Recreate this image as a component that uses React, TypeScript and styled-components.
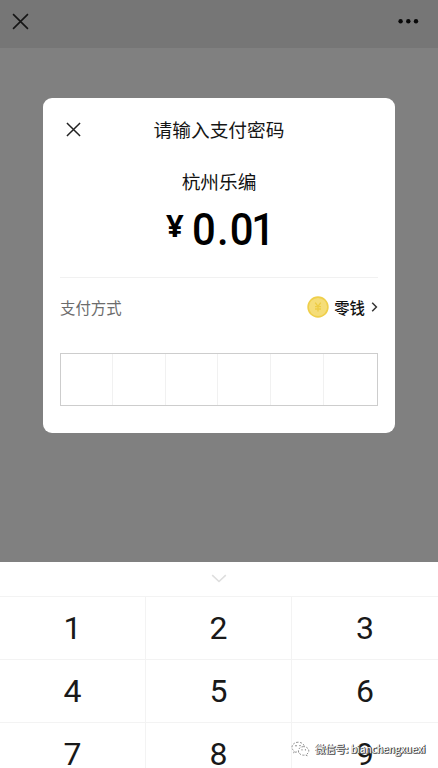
import React from "react";
import styled, { createGlobalStyle } from "styled-components";

const GlobalStyle = createGlobalStyle`
  * { box-sizing: border-box; }
  html, body { margin: 0; padding: 0; overflow: hidden; }
  body { font-family: "Noto Sans CJK SC", sans-serif; color: #161616; }
  button { border: 0; padding: 0; margin: 0; background: none; font: inherit; color: inherit; display: block; }
  svg { display: block; }
`;

const Screen = styled.div`
  position: relative;
  width: 438px;
  height: 768px;
  overflow: hidden;
  display: flex;
  flex-direction: column;
  background: #808080;
`;

const NavBar = styled.header`
  flex: none;
  height: 48px;
  padding: 13px 18px 0 12px;
  display: flex;
  justify-content: space-between;
  align-items: flex-start;
  background: #767676;
`;

const Stage = styled.main`
  flex: none;
  height: 514px;
  padding: 50px 43px 0;
`;

const Card = styled.section`
  height: 335px;
  padding: 0 17px;
  border-radius: 9px;
  background: #fff;
`;

const CardHeader = styled.div`
  height: 62px;
  padding-left: 6px;
  display: grid;
  grid-template-columns: 15px 1fr 15px;
  align-items: center;
`;

const Title = styled.h1`
  margin: 0;
  padding-right: 6px;
  text-align: center;
  font-size: 18.7px;
  line-height: 28px;
  font-weight: 400;
  white-space: nowrap;
`;

const Payee = styled.div`
  height: 28px;
  margin-top: 7px;
  text-align: center;
  font-size: 18.7px;
  line-height: 28px;
  color: #111;
`;

const Amount = styled.div`
  height: 83px;
  padding: 9px 0 0 106px;
  display: flex;
  align-items: flex-start;
  border-bottom: 1px solid #f1f1f1;
  font-weight: 500;
  color: #000;
`;

const Currency = styled.span`
  width: 26px;
  font-family: "Noto Sans", sans-serif;
  font-size: 31px;
  font-weight: 700;
  line-height: 42px;
`;

const Value = styled.span`
  font-family: Roboto, sans-serif;
  font-size: 45px;
  line-height: 52px;
  letter-spacing: 1.2px;
  transform: scaleX(0.93);
  transform-origin: left center;
`;

const TightDigit = styled.span`
  letter-spacing: -2.4px;
`;

const Method = styled.div`
  height: 58px;
  display: flex;
  align-items: center;
  justify-content: space-between;
  font-size: 15.4px;
`;

const MethodLabel = styled.span`
  color: #6c6c6c;
`;

const MethodChoice = styled.button`
  && { display: flex; }
  align-items: center;
  color: #111;
  font-weight: 500;
`;

const ChoiceName = styled.span`
  margin: 0 6px 0 5px;
`;

const PinBox = styled.div`
  height: 53px;
  margin-top: 17px;
  display: grid;
  grid-template-columns: 52px repeat(4, 52.7px) 1fr;
  border: 1px solid #cdcdcd;
`;

const PinCell = styled.div`
  border-right: 1px solid #f1f1f1;
  &:last-child { border-right: 0; }
`;

const Keyboard = styled.section`
  flex: none;
  background: #fff;
`;

const CollapseBar = styled.div`
  height: 34px;
  padding-top: 12px;
  display: flex;
  justify-content: center;
`;

const Keys = styled.div`
  display: grid;
  grid-template-columns: 146px 146px 146px;
  grid-auto-rows: 63.2px;
`;

const Key = styled.button`
  && {
    border-top: 1px solid #f3f3f3;
    font-family: Roboto, sans-serif;
    font-size: 32px;
    line-height: 63px;
    text-align: center;
    color: #191919;
  }
  &&:not(:nth-child(3n)) { border-right: 1px solid #f3f3f3; }
`;

const Watermark = styled.div`
  position: absolute;
  left: 291px;
  top: 739px;
  height: 20px;
  display: flex;
  align-items: center;
  gap: 5px;
  font-size: 10.2px;
  line-height: 20px;
  white-space: nowrap;
  color: #fff;
  text-shadow: 1px 0 0 #444, 0 1px 0 #666, 1px 1px 0 #555;
`;

const CloseIcon = ({ size, color, weight }: { size: number; color: string; weight: number }) => (
  <svg width={size} height={size} viewBox="0 0 16 16" fill="none" stroke={color} strokeWidth={weight}>
    <path d="M1 1 15 15M15 1 1 15" />
  </svg>
);

const MoreIcon = () => (
  <svg width="23" height="17" viewBox="0 0 23 17" fill="#080808">
    <circle cx="3.6" cy="8.3" r="2.2" />
    <circle cx="11.3" cy="8.3" r="2.2" />
    <circle cx="19" cy="8.3" r="2.2" />
  </svg>
);

const CoinIcon = () => (
  <svg width="22" height="22" viewBox="0 0 22 22" fill="none">
    <circle cx="11" cy="11" r="9.9" fill="#f5dd78" stroke="#efcf4b" strokeWidth="1.6" />
    <path d="M8.2 6.6 11 10.4 13.8 6.6M11 10.4V15.6M8 10.6h6M8 13h6" stroke="#edcc45" strokeWidth="1.3" />
  </svg>
);

const WeChatIcon = () => (
  <svg width="19" height="16" viewBox="0 0 19 16" fill="#fff" stroke="#777" strokeWidth=".8" strokeDasharray="2 1.4">
    <path d="M7.2 1.2C3.7 1.2 1 3.4 1 6.2c0 1.600.9 3 2.300 3.900l-.6 2 2.300-1.200c.7.2 1.400.3 2.200.3 3.500 0 6.200-2.200 6.200-5S10.700 1.200 7.200 1.200Z" />
    <path d="M12.600 5.600c-2.900 0-5.200 1.900-5.200 4.300s2.300 4.300 5.200 4.300c.6 0 1.300-.1 1.800-.3l1.900 1-.5-1.700c1.200-.8 2-2 2-3.300 0-2.400-2.300-4.300-5.200-4.300Z" />
    <g fill="#666" stroke="none">
      <circle cx="5" cy="4.800" r=".7" />
      <circle cx="9" cy="4.600" r=".7" />
      <circle cx="11" cy="8.800" r=".6" />
      <circle cx="14.400" cy="8.800" r=".6" />
    </g>
  </svg>
);

const digits = ["1", "2", "3", "4", "5", "6", "7", "8", "9"];

export default function App() {
  return (
    <>
      <GlobalStyle />
      <Screen>
        <NavBar>
          <button aria-label="关闭"><CloseIcon size={17} color="#151515" weight={1.5} /></button>
          <button aria-label="更多"><MoreIcon /></button>
        </NavBar>
        <Stage>
          <Card>
            <CardHeader>
              <button aria-label="取消"><CloseIcon size={15} color="#222" weight={1.6} /></button>
              <Title>请输入支付密码</Title>
            </CardHeader>
            <Payee>杭州乐编</Payee>
            <Amount>
              <Currency>¥</Currency>
              <Value>0.<TightDigit>0</TightDigit>1</Value>
            </Amount>
            <Method>
              <MethodLabel>支付方式</MethodLabel>
              <MethodChoice>
                <CoinIcon />
                <ChoiceName>零钱</ChoiceName>
                <svg width="7" height="10" viewBox="0 0 7 10" fill="none" stroke="#333" strokeWidth="1.5">
                  <path d="M1.200.8 5.400 5 1.200 9.200" />
                </svg>
              </MethodChoice>
            </Method>
            <PinBox>
              {[0, 1, 2, 3, 4, 5].map((i) => <PinCell key={i} />)}
            </PinBox>
          </Card>
        </Stage>
        <Keyboard>
          <CollapseBar>
            <svg width="16" height="9" viewBox="0 0 16 9" fill="none" stroke="#dedede" strokeWidth="1.6">
              <path d="M1.200 1.200 8 7.500 14.800 1.200" />
            </svg>
          </CollapseBar>
          <Keys>
            {digits.map((d) => <Key key={d}>{d}</Key>)}
          </Keys>
        </Keyboard>
        <Watermark>
          <WeChatIcon />
          <span>微信号: bianchengxuexi</span>
        </Watermark>
      </Screen>
    </>
  );
}
